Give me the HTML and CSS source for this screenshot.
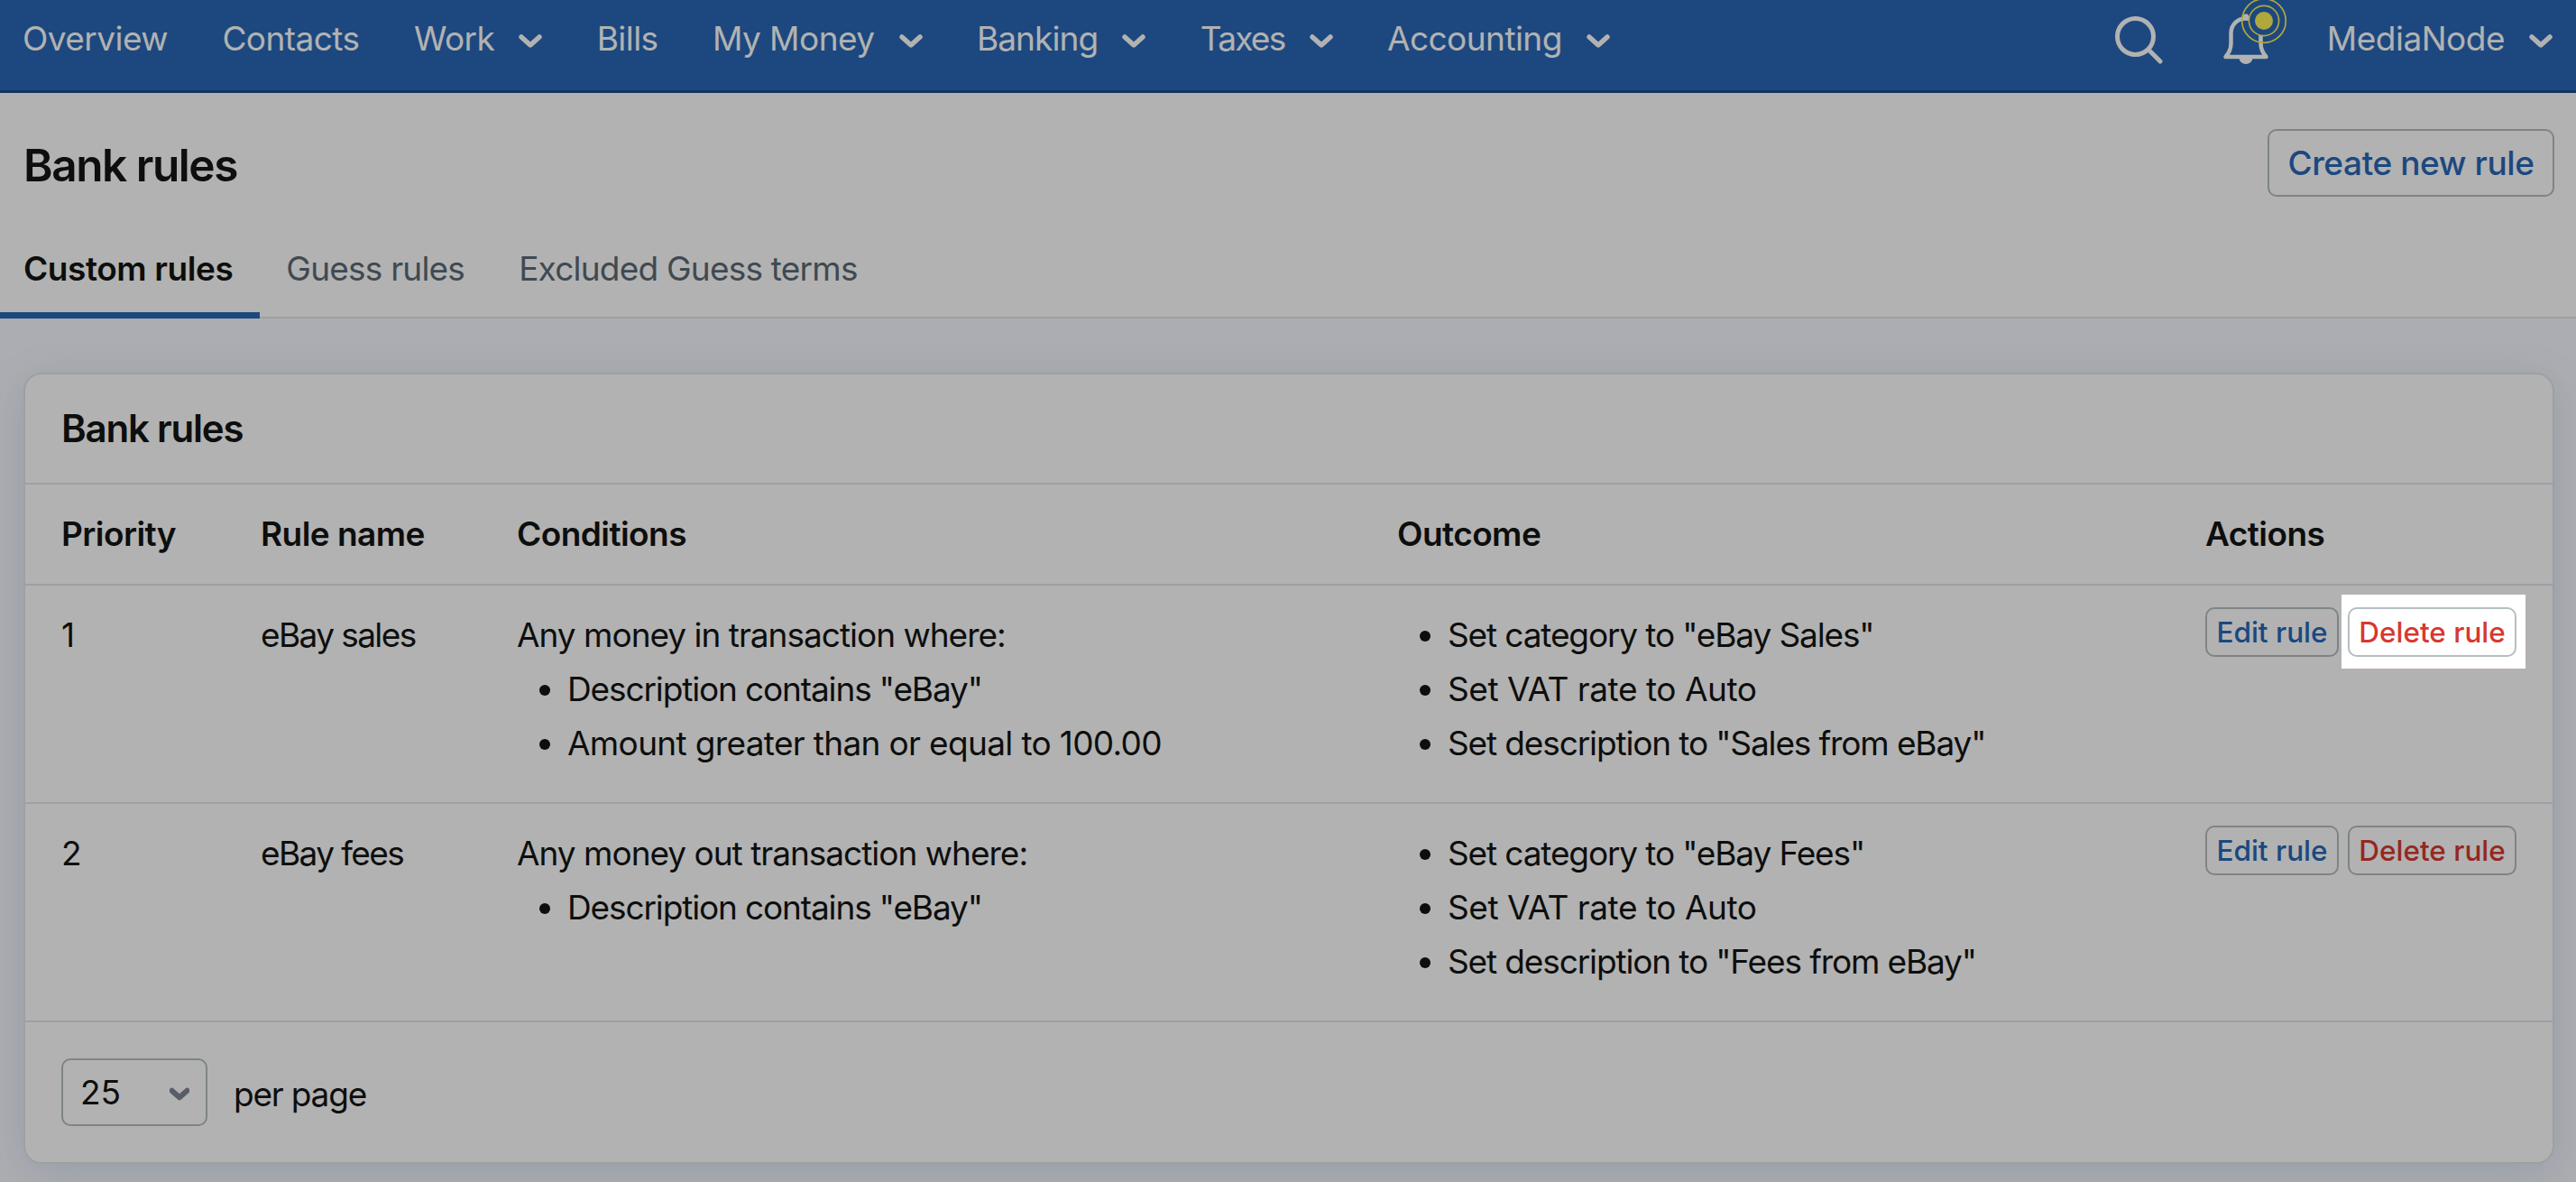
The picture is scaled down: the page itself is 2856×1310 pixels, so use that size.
FILE: index.html
```html
<!DOCTYPE html>
<html lang="en">
<head>
    <meta charset="UTF-8">
    <title>Bank rules</title>
    <link rel="stylesheet" href="styles.css">
</head>
<body>
    <header class="topbar">
        <nav class="nav">
            <a>Overview</a>
            <a>Contacts</a>
            <a>Work <svg class="chevron" viewBox="0 0 26 15"><path d="M3 3l10 9 10-9"/></svg></a>
            <a>Bills</a>
            <a>My Money <svg class="chevron" viewBox="0 0 26 15"><path d="M3 3l10 9 10-9"/></svg></a>
            <a class="tight">Banking <svg class="chevron" viewBox="0 0 26 15"><path d="M3 3l10 9 10-9"/></svg></a>
            <a class="tighter">Taxes <svg class="chevron" viewBox="0 0 26 15"><path d="M3 3l10 9 10-9"/></svg></a>
            <a>Accounting <svg class="chevron" viewBox="0 0 26 15"><path d="M3 3l10 9 10-9"/></svg></a>
        </nav>
        <div class="account">
            <svg class="icon-search" viewBox="0 0 54 85">
                <circle cx="23.5" cy="40.5" r="20"/>
                <path d="M38.5 55.5L51 68"/>
            </svg>
            <svg class="icon-bell" viewBox="0 0 72 85">
                <path class="bell-line" d="M26 20.5c-9.500 0-16.500 7-16.500 16.500v11c0 6-1.500 10-6 15h45c-4.500-5-6-9-6-15v-11c0-9.500-7-16.500-16.500-16.500z"/>
                <rect class="bell-fill" x="23" y="15.500" width="6" height="7" rx="2"/>
                <path class="bell-fill" d="M18.500 64a7.500 7 0 0 0 15 0z"/>
                <circle class="pulse-inner" cx="46" cy="23" r="16.600"/>
                <circle class="pulse-outer" cx="46" cy="23" r="24.300"/>
                <circle class="pulse-dot" cx="46" cy="23" r="10"/>
            </svg>
            <a>MediaNode <svg class="chevron" viewBox="0 0 26 15"><path d="M3 3l10 9 10-9"/></svg></a>
        </div>
    </header>

    <div class="page-header">
        <div class="title-row">
            <h1>Bank rules</h1>
            <button class="btn">Create new rule</button>
        </div>
        <div class="tabs">
            <a class="tab active">Custom rules</a>
            <a class="tab">Guess rules</a>
            <a class="tab">Excluded Guess terms</a>
        </div>
    </div>

    <main class="card">
        <h2>Bank rules</h2>
        <table class="rules">
            <colgroup>
                <col class="col-priority">
                <col class="col-name">
                <col class="col-conditions">
                <col class="col-outcome">
                <col>
            </colgroup>
            <thead>
                <tr>
                    <th>Priority</th>
                    <th>Rule name</th>
                    <th>Conditions</th>
                    <th>Outcome</th>
                    <th>Actions</th>
                </tr>
            </thead>
            <tbody>
                <tr>
                    <td>1</td>
                    <td class="name">eBay sales</td>
                    <td>
                        Any money in transaction where:
                        <ul>
                            <li>Description contains "eBay"</li>
                            <li class="amount">Amount greater than or equal to 100.00</li>
                        </ul>
                    </td>
                    <td>
                        <ul>
                            <li>Set category to "eBay Sales"</li>
                            <li class="vat">Set VAT rate to Auto</li>
                            <li>Set description to "Sales from eBay"</li>
                        </ul>
                    </td>
                    <td>
                        <div class="actions">
                            <button class="btn btn-small">Edit rule</button>
                            <div class="spotlight">
                                <button class="btn btn-small btn-danger">Delete rule</button>
                            </div>
                        </div>
                    </td>
                </tr>
                <tr>
                    <td>2</td>
                    <td class="name">eBay fees</td>
                    <td>
                        Any money out transaction where:
                        <ul>
                            <li>Description contains "eBay"</li>
                        </ul>
                    </td>
                    <td>
                        <ul>
                            <li>Set category to "eBay Fees"</li>
                            <li class="vat">Set VAT rate to Auto</li>
                            <li>Set description to "Fees from eBay"</li>
                        </ul>
                    </td>
                    <td>
                        <div class="actions">
                            <button class="btn btn-small">Edit rule</button>
                            <button class="btn btn-small btn-danger">Delete rule</button>
                        </div>
                    </td>
                </tr>
            </tbody>
        </table>
        <div class="card-footer">
            <div class="select">25 <svg class="chevron" viewBox="0 0 26 15"><path d="M3 3l10 9 10-9"/></svg></div>
            <span class="per-page">per page</span>
        </div>
    </main>
</body>
</html>
```
FILE: styles.css
```css
* { box-sizing: border-box; }

body {
    margin: 0;
    height: 1310px;
    overflow: hidden;
    background: #f6f8ff;
    color: #131514;
    font-family: Inter, "Liberation Sans", sans-serif;
    font-size: 37px;
}

h1, h2 { margin: 0; font-weight: 600; }

/* top bar */
.topbar {
    display: flex;
    justify-content: space-between;
    height: 103px;
    padding: 0 26px 0 25px;
    background: #2967b6;
    border-bottom: 3px solid #1b4a89;
    color: #fff;
    letter-spacing: -0.5px;
}
.nav, .account { display: flex; height: 85px; align-items: center; }
.nav { gap: 60.4px; letter-spacing: -0.55px; }
.nav a, .account a { display: flex; align-items: center; gap: 27px; white-space: nowrap; }
.nav .tight { letter-spacing: -0.9px; }
.nav .tighter { letter-spacing: -1.7px; }

.chevron { width: 26px; height: 15px; margin-top: 5px; }
.chevron path { fill: none; stroke: currentColor; stroke-width: 5.5; stroke-linecap: round; stroke-linejoin: round; }

.icon-search { width: 54px; height: 85px; margin-right: 66px; fill: none; stroke: #fff; stroke-width: 5; stroke-linecap: round; }
.icon-bell { width: 72px; height: 85px; margin-right: 44px; }
.bell-line { fill: none; stroke: #fff; stroke-width: 4.5; stroke-linejoin: round; }
.bell-fill { fill: #fff; }
.pulse-inner { fill: #2967b6; stroke: #fdef58; stroke-width: 1.7; }
.pulse-outer { fill: none; stroke: #fdef58; stroke-width: 1.7; }
.pulse-dot { fill: #fdef58; }

/* page header */
.page-header { height: 250px; padding-top: 40px; background: #fff; border-bottom: 2px solid #e2e4e8; }
.title-row { display: flex; justify-content: space-between; align-items: center; height: 75px; padding: 0 24px 0 26px; }
.title-row h1 { padding-top: 5px; font-size: 49.5px; letter-spacing: -1.45px; }

.btn {
    width: 318px;
    height: 75px;
    padding: 0;
    background: #fff;
    border: 2px solid #b5bec1;
    border-radius: 10px;
    color: #2967b6;
    font-family: inherit;
    font-size: 37px;
    font-weight: 550;
    letter-spacing: -0.4px;
    white-space: nowrap;
}
.btn-small { width: 148px; height: 55px; font-size: 31.5px; letter-spacing: 0; }
.btn-danger { width: 187px; color: #d6392f; }

.tabs { display: flex; gap: 29px; margin-top: 49px; }
.tab { height: 86px; padding-right: 31px; line-height: 61px; color: #5c6974; letter-spacing: -0.78px; }
.tab.active { padding-left: 26px; padding-right: 30px; border-bottom: 7px solid #2967b6; color: #131514; font-weight: 600; letter-spacing: -0.42px; }

/* card */
.card {
    margin: 60px 24px 0 26px;
    background: #fff;
    border: 2px solid #e2e4ea;
    border-radius: 20px;
    box-shadow: 0 8px 48px rgba(0, 72, 104, 0.12);
}
.card h2 { height: 122px; padding-left: 40px; line-height: 120px; font-size: 42px; letter-spacing: -1.2px; border-bottom: 2px solid #e4e4ec; }

.rules { width: 100%; table-layout: fixed; border-collapse: separate; border-spacing: 0; }
.col-priority { width: 261px; }
.col-name { width: 284px; }
.col-conditions { width: 976px; }
.col-outcome { width: 896px; }
.rules th { height: 112px; padding: 0 0 1px; text-align: left; font-weight: 600; letter-spacing: -0.55px; border-bottom: 2px solid #e4e4ec; }
.rules td { height: 242px; padding: 25px 0 35px; vertical-align: top; line-height: 60px; letter-spacing: -1px; border-bottom: 2px solid #e4e4ec; }
.rules th:first-child, .rules td:first-child { padding-left: 40px; }
.rules .name { letter-spacing: -1.6px; }

.rules ul { margin: 0; padding: 0 0 0 25px; list-style: none; }
.rules li { display: flex; align-items: center; letter-spacing: -1.13px; }
.rules li::before { content: ""; width: 12px; height: 12px; margin: 1px 19px 0 0; border-radius: 50%; background: #131514; }
.rules .amount { letter-spacing: -0.66px; }
.rules .vat { letter-spacing: -0.46px; }

.actions { display: flex; gap: 10px; margin-top: -1px; }

/* highlights one control and dims the rest of the page */
.spotlight { position: relative; height: 55px; line-height: 0; }
.spotlight::after {
    content: "";
    position: absolute;
    inset: -14px -10px -13px -7px;
    z-index: 10;
    box-shadow: 0 0 0 4000px rgba(0, 0, 0, 0.3);
    pointer-events: none;
}

.card-footer { display: flex; align-items: center; height: 155px; padding: 0 40px; }
.select { display: flex; justify-content: space-between; align-items: center; width: 162px; height: 75px; padding: 0 18px 0 19px; border: 2px solid #b5bec1; border-radius: 10px; }
.select .chevron { width: 22px; margin-top: 4px; color: #7d8791; }
.select .chevron path { stroke-width: 7; }
.per-page { padding-top: 4px; margin-left: 29px; letter-spacing: -1.2px; }
```
